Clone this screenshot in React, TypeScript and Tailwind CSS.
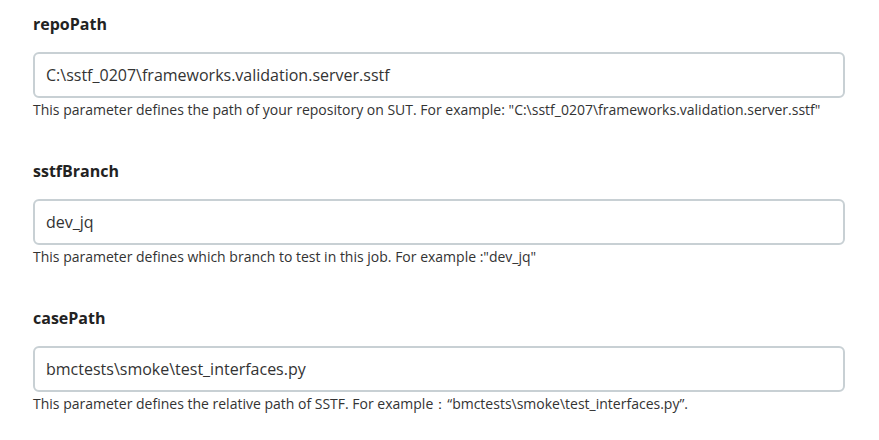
import React from 'react';

const fields = [
  {
    name: 'repoPath',
    value: 'C:\\sstf_0207\\frameworks.validation.server.sstf',
    help: 'This parameter defines the path of your repository on SUT. For example: "C:\\sstf_0207\\frameworks.validation.server.sstf"',
  },
  {
    name: 'sstfBranch',
    value: 'dev_jq',
    help: 'This parameter defines which branch to test in this job. For example :"dev_jq"',
  },
  {
    name: 'casePath',
    value: 'bmctests\\smoke\\test_interfaces.py',
    help: 'This parameter defines the relative path of SSTF. For example：“bmctests\\smoke\\test_interfaces.py”.',
  },
];

export default function App() {
  return (
    <main className="min-h-screen w-[879px] bg-white pl-[33px] pt-[12px] font-['Open_Sans',sans-serif]">
      <div className="w-[812px] flex flex-col gap-[40px]">
        {fields.map((f) => (
          <div key={f.name}>
            {/* label */}
            <div className="h-[24px] text-[16px] leading-[24px] font-bold text-[#222]">{f.name}</div>
            <div className="mt-[16px] h-[46px] rounded-[6px] border-2 border-[#c8d0d4] flex items-center pl-[11px] text-[16px] text-[#333]">
              {f.value}
            </div>
            <p className="mt-[2px] h-[19px] text-[14px] leading-[19px] text-[#333]">{f.help}</p>
          </div>
        ))}
      </div>
    </main>
  );
}
